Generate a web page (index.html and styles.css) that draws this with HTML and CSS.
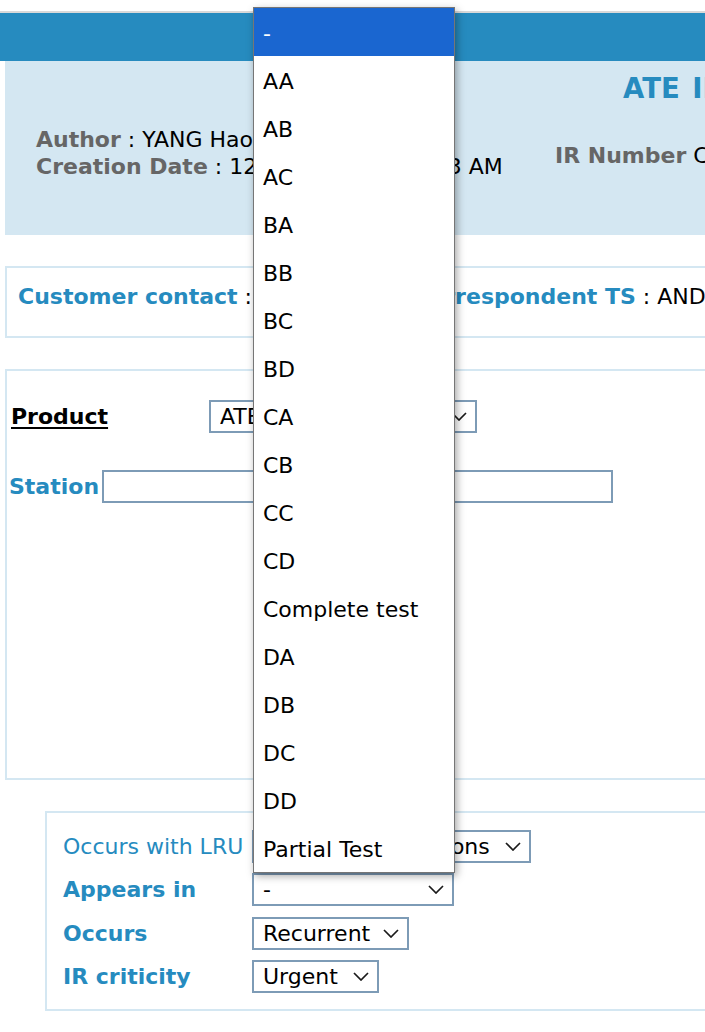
FILE: index.html
```html
<!DOCTYPE html>
<html>
<head>
<meta charset="utf-8">
<title>ATE Incident Report</title>
<link rel="stylesheet" href="styles.css">
</head>
<body>
<div class="page">
  <div class="topline"></div>
  <div class="bar"></div>

  <div class="panel">
    <div class="title">ATE IR Report</div>
    <div class="meta">
      <div class="meta-left">
        <div class="line"><span class="glbl">Author</span> : YANG Haoran</div>
        <div class="line"><span class="glbl">Creation Date</span> : 12/08/2016 10:45:53 AM</div>
      </div>
      <div class="meta-right">
        <div class="line"><span class="glbl">IR Number</span> CR16-00421</div>
      </div>
    </div>
  </div>

  <div class="box contact">
    <div class="contact-cell first"><span class="blbl">Customer contact</span> : LI Wei</div>
    <div class="contact-cell"><span class="blbl">Correspondent TS</span> : ANDRE Paul</div>
  </div>

  <div class="box product">
    <div class="prow">
      <div class="plabel">Product</div>
      <div class="sel w-product"><span>ATE IRT-3000</span><svg class="chev" viewBox="0 0 16 9"><path d="M1 1 L8 8 L15 1"/></svg></div>
    </div>
    <div class="srow">
      <div class="blbl">Station</div>
      <div class="input"></div>
    </div>
  </div>

  <div class="box details">
    <div class="grid">
      <div class="dlabel normal">Occurs with LRU</div>
      <div class="sel w-lru"><span>Some configurations</span><svg class="chev" viewBox="0 0 16 9"><path d="M1 1 L8 8 L15 1"/></svg></div>
      <div class="dlabel">Appears in</div>
      <div class="sel w-appears"><span>-</span><svg class="chev" viewBox="0 0 16 9"><path d="M1 1 L8 8 L15 1"/></svg></div>
      <div class="dlabel">Occurs</div>
      <div class="sel w-occurs"><span>Recurrent</span><svg class="chev" viewBox="0 0 16 9"><path d="M1 1 L8 8 L15 1"/></svg></div>
      <div class="dlabel">IR criticity</div>
      <div class="sel w-crit"><span>Urgent</span><svg class="chev" viewBox="0 0 16 9"><path d="M1 1 L8 8 L15 1"/></svg></div>
    </div>
  </div>
</div>

<ul class="dropdown">
  <li class="active">-</li>
  <li>AA</li>
  <li>AB</li>
  <li>AC</li>
  <li>BA</li>
  <li>BB</li>
  <li>BC</li>
  <li>BD</li>
  <li>CA</li>
  <li>CB</li>
  <li>CC</li>
  <li>CD</li>
  <li>Complete test</li>
  <li>DA</li>
  <li>DB</li>
  <li>DC</li>
  <li>DD</li>
  <li>Partial Test</li>
</ul>
</body>
</html>
```

FILE: styles.css
```css
html, body {
  margin: 0;
  padding: 0;
  overflow: hidden;
  background: #ffffff;
}

body {
  font-family: "DejaVu Sans", Verdana, sans-serif;
  font-size: 22px;
  color: #000;
  line-height: 27px;
}

.page {
  width: 1100px;
}

.topline {
  margin-top: 11px;
  height: 2px;
  background: #d9d9d9;
}

.bar {
  height: 48px;
  background: #268bbf;
}

.panel {
  margin-left: 5px;
  background: #d4e7f2;
  padding: 11px 0 55px 31px;
}

.title {
  margin-left: 587px;
  font-size: 27.5px;
  line-height: 32px;
  font-weight: bold;
  color: #268bbf;
  white-space: nowrap;
  word-spacing: 3px;
}

.meta {
  display: flex;
  margin-top: 22px;
}

.meta-left {
  width: 519px;
  flex: none;
}

.meta-right {
  margin-top: 16px;
}

.line {
  white-space: nowrap;
}

.glbl {
  font-weight: bold;
  color: #666666;
}

.blbl {
  font-weight: bold;
  color: #268bbf;
}

.box {
  margin-left: 5px;
  margin-top: 31px;
  border: 2px solid #d4e7f2;
  border-right: none;
}

.contact {
  display: flex;
  padding: 15px 0 26px 11px;
  white-space: nowrap;
}

.contact-cell.first {
  width: 395px;
  flex: none;
}

.product {
  padding: 29px 0 275px 4px;
}

.prow {
  display: flex;
  align-items: center;
}

.plabel {
  width: 198px;
  flex: none;
  font-weight: bold;
  text-decoration: underline;
  text-underline-offset: 3px;
}

.srow {
  display: flex;
  align-items: center;
  gap: 3px;
  margin-top: 37px;
  margin-left: -2px;
}

.input {
  width: 507px;
  height: 29px;
  border: 2px solid #7d9bb6;
}

.sel {
  display: flex;
  align-items: center;
  box-sizing: border-box;
  height: 33px;
  border: 2px solid #7d9bb6;
  padding: 0 8px 0 9px;
  background: #fff;
  white-space: nowrap;
  overflow: hidden;
}

.sel span {
  flex: 1;
  overflow: hidden;
}

.chev {
  width: 16px;
  height: 9px;
  flex: none;
  margin-left: 8px;
}

.chev path {
  fill: none;
  stroke: #1a1a1a;
  stroke-width: 1.7;
}

.w-product { width: 268px; }
.w-lru { width: 279px; }
.w-appears { width: 202px; }
.w-occurs { width: 157px; }
.w-crit { width: 127px; }

.details {
  margin-left: 45px;
  padding: 17px 0 16px 16px;
}

.grid {
  display: grid;
  grid-template-columns: 189px auto;
  justify-content: start;
  align-items: center;
  row-gap: 10.4px;
}

.dlabel {
  font-weight: bold;
  color: #268bbf;
  white-space: nowrap;
}

.dlabel.normal {
  font-weight: normal;
}

.dropdown {
  position: absolute;
  top: 7px;
  left: 253px;
  width: 200px;
  margin: 0;
  padding: 0;
  list-style: none;
  background: #fff;
  border: 1px solid #767676;
  box-shadow: 2px 3px 8px rgba(0, 0, 0, 0.35);
}

.dropdown li {
  box-sizing: border-box;
  height: 48px;
  padding-top: 2px;
  line-height: 48px;
  padding-left: 9px;
  white-space: nowrap;
  overflow: hidden;
}

.dropdown li.active {
  background: #1a66d0;
  color: #fff;
}
```
